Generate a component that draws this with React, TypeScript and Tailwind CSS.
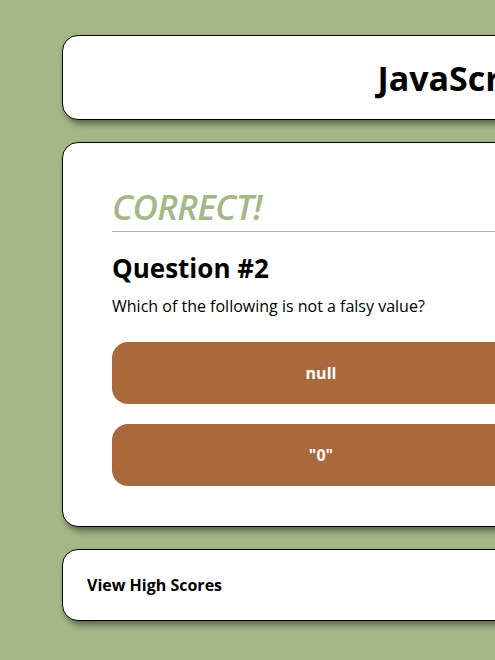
import React from 'react';

const FONT = { fontFamily: '"Open Sans", "Liberation Sans", sans-serif' };

const answers = ['null', '"0"'];

export default function App() {
  return (
    <div className="min-h-screen bg-[#a3b787] pt-[35px] pl-[62px] overflow-hidden" style={FONT}>
      <div className="w-[886px] flex flex-col gap-[22px]">
        {/* Header */}
        <header className="h-[85px] bg-white border border-black rounded-2xl shadow-[3px_4px_6px_rgba(0,0,0,0.45)] flex items-center justify-center">
          <h1 className="text-[34px] font-bold text-black leading-none">JavaScript Quiz</h1>
        </header>

        {/* Question card */}
        <main className="bg-white border border-black rounded-2xl shadow-[3px_4px_6px_rgba(0,0,0,0.45)] pl-[49px] pt-[42px] pb-[40px]">
          <div className="text-[35px] italic font-semibold text-[#a3b787] leading-tight tracking-[-0.6px] border-b border-[#a8b89a] pb-[2px]">
            CORRECT!
          </div>
          <h2 className="mt-[20px] text-[26px] font-bold text-black leading-tight">Question #2</h2>
          <p className="mt-[10px] text-base text-black">Which of the following is not a falsy value?</p>
          <div className="mt-[24px] flex flex-col gap-5">
            {answers.map((a) => (
              <button
                key={a}
                className="w-[418px] h-[62px] rounded-2xl bg-[#a9693c] text-white font-bold text-base"
              >
                {a}
              </button>
            ))}
          </div>
        </main>

        {/* Footer */}
        <footer className="h-[72px] bg-white border border-black rounded-2xl shadow-[3px_4px_6px_rgba(0,0,0,0.45)] flex items-center pl-[24px]">
          <span className="text-base font-bold text-black">View High Scores</span>
        </footer>
      </div>
    </div>
  );
}
